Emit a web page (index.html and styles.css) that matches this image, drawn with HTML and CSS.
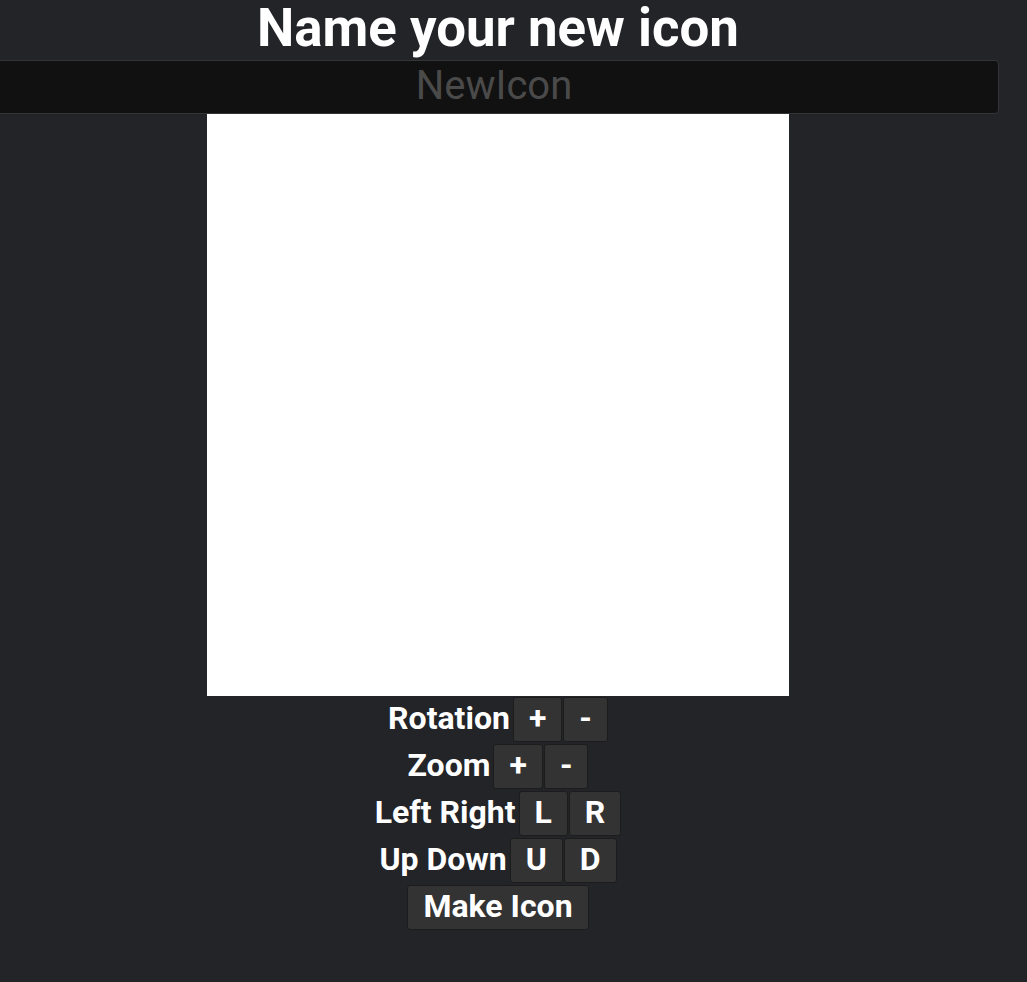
FILE: index.html
```html
<!DOCTYPE html>
<html>
<head>
<meta charset="utf-8">
<link rel="stylesheet" href="styles.css">
</head>
<body>
<div class="page">
  <h1 class="title">Name your new icon</h1>
  <input class="name-input" type="text" placeholder="NewIcon">
  <div class="canvas"></div>
  <div class="controls">
    <div class="row"><span class="label">Rotation</span><button class="btn">+</button><button class="btn">-</button></div>
    <div class="row"><span class="label">Zoom</span><button class="btn">+</button><button class="btn">-</button></div>
    <div class="row"><span class="label">Left Right</span><button class="btn">L</button><button class="btn">R</button></div>
    <div class="row"><span class="label">Up Down</span><button class="btn">U</button><button class="btn">D</button></div>
    <div class="row"><button class="btn">Make Icon</button></div>
  </div>
</div>
</body>
</html>
```
FILE: styles.css
```css
html, body {
  margin: 0;
  padding: 0;
  background: #232428;
  font-family: Roboto, "Liberation Sans", sans-serif;
  color: #ffffff;
}
.page {
  width: 996px;
  display: flex;
  flex-direction: column;
  align-items: center;
}
.title {
  box-sizing: border-box;
  margin: 0;
  font-size: 52.8px;
  font-weight: 700;
  line-height: 56px;
  height: 60px;
  padding-bottom: 4px;
  text-align: center;
}
.name-input {
  box-sizing: border-box;
  align-self: flex-start;
  margin-left: -11px;
  width: 1010px;
  height: 54px;
  background: #111111;
  border: 1px solid #333436;
  border-radius: 4px;
  font-family: Roboto, "Liberation Sans", sans-serif;
  font-size: 40px;
  text-align: center;
  color: #ffffff;
  padding: 0 0 3px 0;
  outline: none;
}
.name-input::placeholder {
  color: #4a4a4a;
}
.canvas {
  width: 582px;
  height: 582px;
  background: #ffffff;
}
.controls {
  display: flex;
  flex-direction: column;
  align-items: center;
  gap: 2px;
  margin-top: 1px;
}
.row {
  display: flex;
  align-items: center;
  gap: 1px;
}
.label {
  font-size: 32px;
  font-weight: 700;
  margin-right: 2px;
  padding-bottom: 3px;
}
.btn {
  box-sizing: border-box;
  height: 45px;
  padding: 0 15px 3px 15px;
  background: #333333;
  border: 1px solid #1c1c1c;
  border-radius: 3px;
  color: #ffffff;
  font-family: Roboto, "Liberation Sans", sans-serif;
  font-size: 32px;
  font-weight: 700;
}
```
